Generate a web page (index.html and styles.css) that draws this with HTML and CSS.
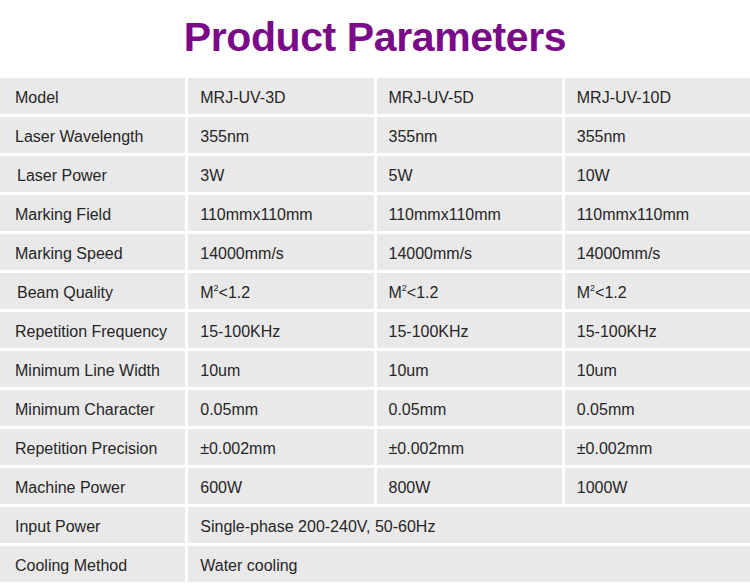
FILE: index.html
```html
<!DOCTYPE html>
<html>
<head>
<meta charset="utf-8">
<link rel="stylesheet" href="styles.css">
</head>
<body>
<h1 class="title">Product Parameters</h1>
<div class="table">
  <div class="row"><div class="cell">Model</div><div class="cell">MRJ-UV-3D</div><div class="cell">MRJ-UV-5D</div><div class="cell">MRJ-UV-10D</div></div>
  <div class="row"><div class="cell">Laser Wavelength</div><div class="cell">355nm</div><div class="cell">355nm</div><div class="cell">355nm</div></div>
  <div class="row"><div class="cell shift">Laser Power</div><div class="cell">3W</div><div class="cell">5W</div><div class="cell">10W</div></div>
  <div class="row"><div class="cell">Marking Field</div><div class="cell">110mmx110mm</div><div class="cell">110mmx110mm</div><div class="cell">110mmx110mm</div></div>
  <div class="row"><div class="cell">Marking Speed</div><div class="cell">14000mm/s</div><div class="cell">14000mm/s</div><div class="cell">14000mm/s</div></div>
  <div class="row"><div class="cell shift">Beam Quality</div><div class="cell">M<sup>2</sup>&lt;1.2</div><div class="cell">M<sup>2</sup>&lt;1.2</div><div class="cell">M<sup>2</sup>&lt;1.2</div></div>
  <div class="row"><div class="cell">Repetition Frequency</div><div class="cell">15-100KHz</div><div class="cell">15-100KHz</div><div class="cell">15-100KHz</div></div>
  <div class="row"><div class="cell">Minimum Line Width</div><div class="cell">10um</div><div class="cell">10um</div><div class="cell">10um</div></div>
  <div class="row"><div class="cell">Minimum Character</div><div class="cell">0.05mm</div><div class="cell">0.05mm</div><div class="cell">0.05mm</div></div>
  <div class="row"><div class="cell">Repetition Precision</div><div class="cell">±0.002mm</div><div class="cell">±0.002mm</div><div class="cell">±0.002mm</div></div>
  <div class="row"><div class="cell">Machine Power</div><div class="cell">600W</div><div class="cell">800W</div><div class="cell">1000W</div></div>
  <div class="row"><div class="cell">Input Power</div><div class="cell span">Single-phase 200-240V, 50-60Hz</div></div>
  <div class="row"><div class="cell">Cooling Method</div><div class="cell span">Water cooling</div></div>
</div>
</body>
</html>
```
FILE: styles.css
```css
html, body {
  margin: 0;
  padding: 0;
  background: #ffffff;
}
body {
  font-family: "Liberation Sans", Arial, sans-serif;
  width: 750px;
}
.title {
  margin: 0;
  padding-top: 14px;
  height: 65px;
  box-sizing: border-box;
  text-align: center;
  font-size: 41px;
  line-height: 46px;
  font-weight: bold;
  color: #7a0a88;
  letter-spacing: -0.4px;
}
.table {
  display: flex;
  flex-direction: column;
  gap: 3px;
  margin-top: 13px;
}
.row {
  display: grid;
  grid-template-columns: repeat(4, 1fr);
  column-gap: 3px;
  height: 36px;
}
.cell {
  background: #e9e9e9;
  color: #262626;
  font-size: 16px;
  display: flex;
  align-items: center;
  padding: 3px 0 0 12px;
  box-sizing: border-box;
}
.row .cell:first-child {
  padding-left: 15px;
}
.row .cell.shift {
  padding-left: 17px;
}
.span {
  grid-column: 2 / 5;
}
sup {
  font-size: 9px;
  vertical-align: 0;
  position: relative;
  top: -5px;
}
```
